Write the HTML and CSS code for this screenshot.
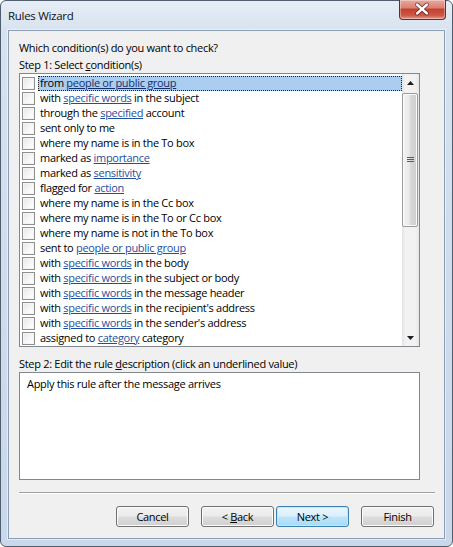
FILE: index.html
```html
<!DOCTYPE html>
<html>
<head>
<meta charset="utf-8">
<title>Rules Wizard</title>
<link rel="stylesheet" href="styles.css">
</head>
<body>
<div class="window">
  <div class="titlebar">
    <span class="title">Rules Wizard</span>
    <div class="close">
      <svg width="47" height="20" viewBox="0 0 47 20">
        <path d="M18.5 5.5 L28.5 14.5 M28.5 5.5 L18.5 14.5" stroke="#5a1d1d" stroke-width="4.2" stroke-linecap="round" fill="none" opacity="0.75"/>
        <path d="M18.5 5.5 L28.5 14.5 M28.5 5.5 L18.5 14.5" stroke="#ffffff" stroke-width="2.6" stroke-linecap="round" fill="none"/>
      </svg>
    </div>
  </div>
  <div class="client">
    <div class="line">Which condition(s) do you want to check?</div>
    <div class="line">Step 1: Select <u>c</u>ondition(s)</div>
    <div class="listbox">
      <ul class="items">
        <li class="item selected"><span class="cb"></span><span class="text">from <a>people or public group</a></span></li>
        <li class="item"><span class="cb"></span><span class="text">with <a>specific words</a> in the subject</span></li>
        <li class="item"><span class="cb"></span><span class="text">through the <a>specified</a> account</span></li>
        <li class="item"><span class="cb"></span><span class="text">sent only to me</span></li>
        <li class="item"><span class="cb"></span><span class="text">where my name is in the To box</span></li>
        <li class="item"><span class="cb"></span><span class="text">marked as <a>importance</a></span></li>
        <li class="item"><span class="cb"></span><span class="text">marked as <a>sensitivity</a></span></li>
        <li class="item"><span class="cb"></span><span class="text">flagged for <a>action</a></span></li>
        <li class="item"><span class="cb"></span><span class="text">where my name is in the Cc box</span></li>
        <li class="item"><span class="cb"></span><span class="text">where my name is in the To or Cc box</span></li>
        <li class="item"><span class="cb"></span><span class="text">where my name is not in the To box</span></li>
        <li class="item"><span class="cb"></span><span class="text">sent to <a>people or public group</a></span></li>
        <li class="item"><span class="cb"></span><span class="text">with <a>specific words</a> in the body</span></li>
        <li class="item"><span class="cb"></span><span class="text">with <a>specific words</a> in the subject or body</span></li>
        <li class="item"><span class="cb"></span><span class="text">with <a>specific words</a> in the message header</span></li>
        <li class="item"><span class="cb"></span><span class="text">with <a>specific words</a> in the recipient's address</span></li>
        <li class="item"><span class="cb"></span><span class="text">with <a>specific words</a> in the sender's address</span></li>
        <li class="item"><span class="cb"></span><span class="text">assigned to <a>category</a> category</span></li>
      </ul>
      <div class="scrollbar">
        <div class="arrow">
          <svg width="17" height="17" viewBox="0 0 17 17"><path d="M5 11 L12 11 L8.5 7 Z" fill="#1e1e1e"/></svg>
        </div>
        <div class="thumb">
          <svg width="9" height="8" viewBox="0 0 9 8"><path d="M1 1.5H8M1 3.5H8M1 5.5H8" stroke="#5a5a5a" stroke-width="1"/></svg>
        </div>
        <div class="track"></div>
        <div class="arrow">
          <svg width="17" height="17" viewBox="0 0 17 17"><path d="M5 7 L12 7 L8.5 11 Z" fill="#1e1e1e"/></svg>
        </div>
      </div>
    </div>
    <div class="line step2">Step 2: Edit the rule <u>d</u>escription (click an underlined value)</div>
    <div class="desc">Apply this rule after the message arrives</div>
    <div class="sep"></div>
    <div class="buttons">
      <button class="btn">Cancel</button>
      <button class="btn back">&lt; <u>B</u>ack</button>
      <button class="btn default">Next &gt;</button>
      <button class="btn finish">Finish</button>
    </div>
  </div>
</div>
</body>
</html>
```

FILE: styles.css
```css
html, body {
  margin: 0;
  padding: 0;
  width: 453px;
  height: 547px;
  overflow: hidden;
  background: #ffffff;
}

.window {
  box-sizing: border-box;
  width: 453px;
  height: 547px;
  border: 1px solid #4f5d6e;
  border-radius: 6px;
  background: linear-gradient(180deg, #e6edf5 0%, #d6e2ef 6%, #cddbeb 60%, #c9d8ea 100%);
  display: flex;
  flex-direction: column;
  font-family: "Open Sans", "Noto Sans", sans-serif;
  font-size: 11px;
  letter-spacing: -0.3px;
  color: #000;
}

.titlebar {
  height: 29px;
  display: flex;
  align-items: flex-start;
  flex: none;
}

.title {
  margin: 7px 0 0 7px;
  font-size: 11.5px;
  line-height: 15px;
  color: #111;
}

.close {
  margin-left: auto;
  margin-right: 6px;
  margin-top: -1px;
  width: 47px;
  height: 20px;
  box-sizing: border-box;
  border: 1px solid #6d2a25;
  border-top: none;
  border-radius: 0 0 4px 4px;
  background: linear-gradient(180deg, #e8a99d 0%, #d98373 40%, #c5412f 50%, #cc5545 80%, #e29a86 100%);
  box-shadow: inset 0 0 0 1px rgba(255,255,255,0.35);
  display: flex;
}

.close svg { margin: -1px 0 0 -1px; }

.client {
  flex: 1;
  margin: 0 7px 7px 7px;
  border: 1px solid #8b9db3;
  box-shadow: 0 0 0 1px rgba(255,255,255,0.5);
  background: #f0f0f0;
  padding: 8px 10px 0 10px;
  display: flex;
  flex-direction: column;
}

.line {
  line-height: 17px;
  height: 17px;
  white-space: nowrap;
}

.step2 { margin-top: 8px; }

u { text-decoration: underline; text-underline-offset: 1px; }

.listbox {
  box-sizing: border-box;
  width: 401px;
  height: 274px;
  border: 1px solid #828790;
  background: #ffffff;
  display: flex;
}

.items {
  list-style: none;
  margin: 0;
  padding: 2px 0 0 0;
  flex: 1;
  overflow: hidden;
}

.item {
  height: 15px;
  display: flex;
  align-items: center;
  white-space: nowrap;
}

.cb {
  box-sizing: border-box;
  width: 13px;
  height: 13px;
  margin-left: 2px;
  margin-right: 3px;
  border: 1px solid #8e8f8f;
  background: linear-gradient(135deg, #e6e6e6 0%, #f8f8f8 60%, #ffffff 100%);
  box-shadow: inset 0 0 0 1px #f4f4f4;
  flex: none;
}

.text {
  flex: 1;
  height: 15px;
  line-height: 14px;
  padding-left: 2px;
  box-sizing: border-box;
}

.selected .text {
  background: #abcdf0;
  outline: 1px dotted #222;
  outline-offset: -1px;
}

.text a {
  color: #1f4ea0;
  text-decoration: underline;
  text-underline-offset: 1px;
}

.selected .text a { color: #13306a; }

.scrollbar {
  width: 17px;
  flex: none;
  display: flex;
  flex-direction: column;
  background: linear-gradient(90deg, #e3e3e3 0%, #f2f2f2 20%, #f2f2f2 80%, #e6e6e6 100%);
}

.arrow {
  height: 17px;
  flex: none;
  display: flex;
}

.thumb {
  box-sizing: border-box;
  margin: 2px 1px 0 0;
  height: 134px;
  border: 1px solid #9b9b9b;
  border-radius: 2px;
  background: linear-gradient(90deg, #f3f3f3 0%, #e9e9e9 45%, #d6d6d6 55%, #cfcfcf 100%);
  box-shadow: inset 0 0 0 1px #fafafa;
  display: flex;
  align-items: center;
  justify-content: center;
  flex: none;
}

.track { flex: 1; }

.desc {
  box-sizing: border-box;
  width: 401px;
  height: 108px;
  border: 1px solid #828790;
  background: #ffffff;
  padding: 3px 0 0 7px;
  line-height: 15px;
}

.sep {
  margin-top: 12px;
  height: 0;
  border-top: 1px solid #a0a0a0;
  border-bottom: 1px solid #ffffff;
  margin-right: -1px;
}

.buttons {
  margin-top: 12px;
  display: flex;
  justify-content: flex-end;
}

.btn {
  box-sizing: border-box;
  width: 73px;
  height: 21px;
  padding: 0;
  border: 1px solid #707070;
  border-radius: 3px;
  background: linear-gradient(180deg, #f2f2f2 0%, #ebebeb 48%, #dddddd 52%, #cfcfcf 100%);
  box-shadow: inset 0 0 0 1px #fcfcfc;
  font-family: "Open Sans", "Noto Sans", sans-serif;
  font-size: 11px;
  letter-spacing: -0.3px;
  color: #000;
  line-height: 17px;
}

.back { margin-left: 12px; }

.default {
  margin-left: 2px;
  border-color: #3c7fb1;
  background: linear-gradient(180deg, #eaf6fd 0%, #d9f0fc 48%, #bee6fd 52%, #a7d9f5 100%);
  box-shadow: inset 0 0 0 1px #c7e6f7;
}

.finish { margin-left: 12px; }
```
